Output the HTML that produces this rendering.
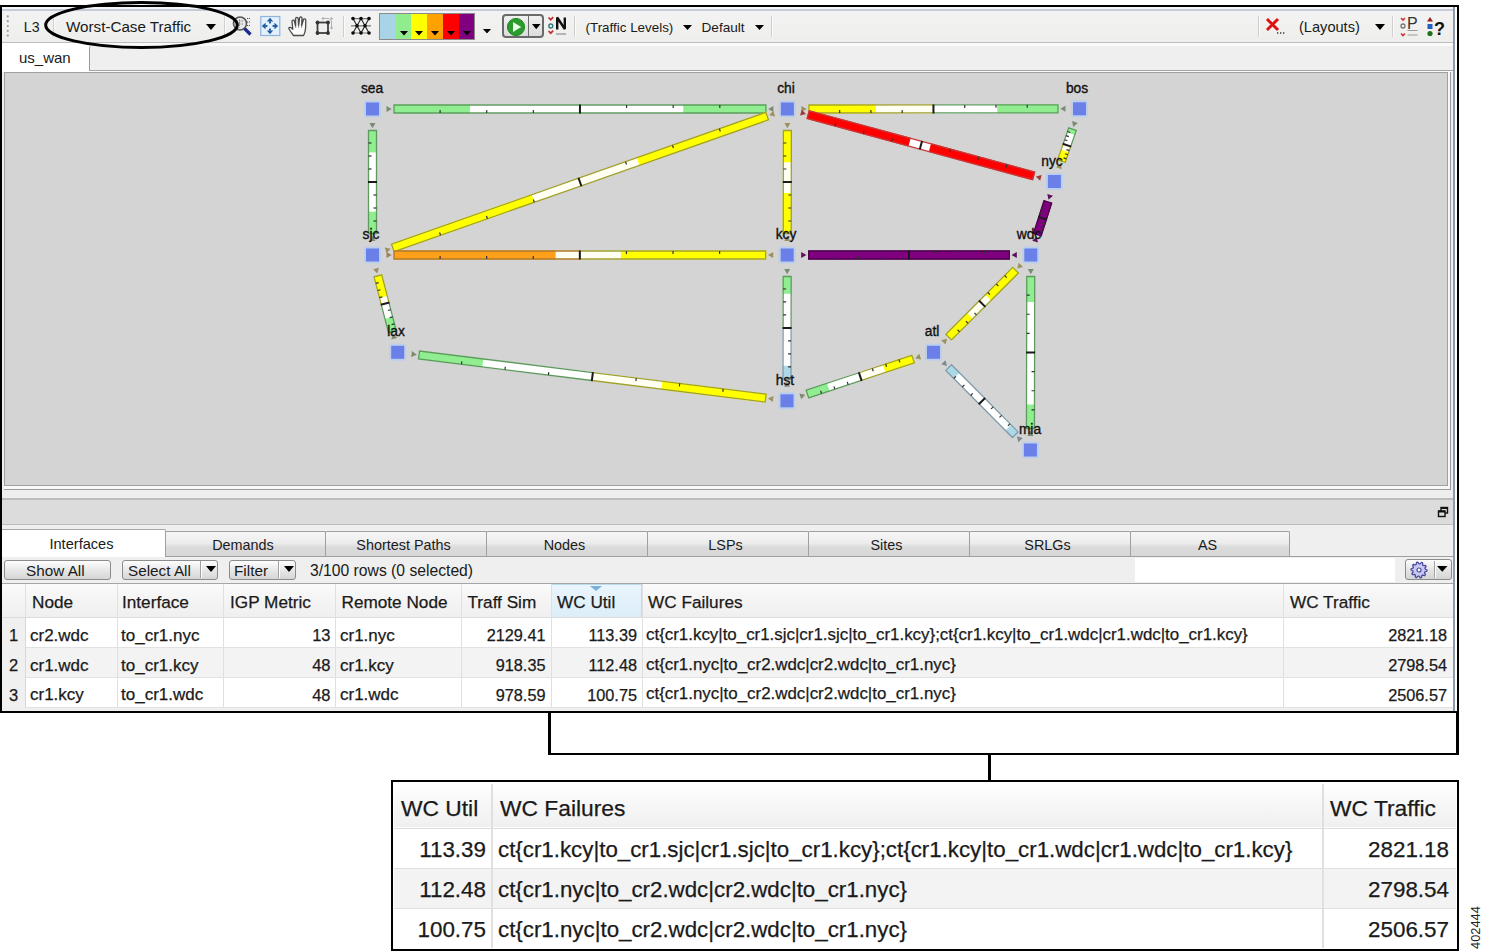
<!DOCTYPE html>
<html><head><meta charset="utf-8">
<style>
*{box-sizing:border-box}
html,body{margin:0;padding:0;background:#fff;width:1489px;height:951px;overflow:hidden;font-family:"Liberation Sans", sans-serif;}
.a{position:absolute}
.t{position:absolute;white-space:pre;color:#1a1a1a;line-height:1}
.b{-webkit-text-stroke:0.25px currentColor}
</style></head><body>
<div class="a" style="left:0px;top:5px;width:1459px;height:708px;background:#efefef;border-left:2px solid #000;border-top:2px solid #000;border-right:2.5px solid #000;border-bottom:2.5px solid #000"></div><div class="a" style="left:2px;top:7px;width:1451px;height:2px;background:#f6f6fa"></div><div class="a" style="left:2px;top:9px;width:1451px;height:2px;background:#c6cad6"></div><div class="a" style="left:2px;top:11px;width:1451px;height:31px;background:linear-gradient(#f3f3f3,#eeeeec)"></div><div class="a" style="left:2px;top:41.5px;width:1451px;height:1.5px;background:#bdbdbd"></div><div class="a" style="left:1453px;top:7px;width:2px;height:704px;background:#8e9baa"></div><div class="a" style="left:1455px;top:7px;width:2px;height:704px;background:#ffffff"></div><svg class="a" style="left:5px;top:14px" width="6" height="26"><circle cx="2.8" cy="2.4" r="1.1" fill="#9a9a9a"/><circle cx="2.8" cy="7.2" r="1.1" fill="#9a9a9a"/><circle cx="2.8" cy="12.0" r="1.1" fill="#9a9a9a"/><circle cx="2.8" cy="16.8" r="1.1" fill="#9a9a9a"/><circle cx="2.8" cy="21.6" r="1.1" fill="#9a9a9a"/></svg><div class="t " style="left:23.8px;top:20.0px;font-size:14.2px;color:#1a1a1a;">L3</div><div class="a" style="left:53px;top:16px;width:1px;height:21px;background:#cfcfcf;border-right:1px solid #fafafa;width:2px"></div><div class="t " style="left:66px;top:18.6px;font-size:15.2px;color:#1a1a1a;">Worst-Case Traffic</div><svg class="a" style="left:206px;top:24px" width="10" height="6"><path d="M0,0H10L5.0,6Z" fill="#000"/></svg><div class="a" style="left:224px;top:16px;width:1px;height:21px;background:#cfcfcf;border-right:1px solid #fafafa;width:2px"></div>
<svg class="a" style="left:228px;top:13px" width="150" height="26" viewBox="228 13 150 26">
 <!-- magnifier -->
 <circle cx="240" cy="23.5" r="6.5" fill="#e8e8e8" stroke="#555" stroke-width="1.6"/>
 <path d="M236.5,21 h7 M236.5,24 h7 M239.5,19.5 v8" stroke="#888" stroke-width="1" stroke-dasharray="1.5 1"/>
 <path d="M244.5,28.5 L250.5,34.5" stroke="#1a2a90" stroke-width="3.2"/>
 <path d="M247,18.5 h3 M247,22 h3 M247,25.5 h3" stroke="#555" stroke-width="1.2" stroke-dasharray="1.2 0.8"/>
 <!-- fit -->
 <rect x="260.8" y="16.5" width="19" height="19" fill="#e2f1fd" stroke="#8fb4dc" stroke-width="1.2"/>
 <g fill="#1f5a9e">
  <path d="M270,17.8 L266.8,21.6 H273.2Z"/><rect x="269" y="21.4" width="2" height="2"/>
  <path d="M270,34.2 L266.8,30.4 H273.2Z"/><rect x="269" y="28.6" width="2" height="2"/>
  <path d="M261.8,26 L265.6,22.8 V29.2Z"/><rect x="265.4" y="25" width="2" height="2"/>
  <path d="M278.2,26 L274.4,22.8 V29.2Z"/><rect x="272.6" y="25" width="2" height="2"/>
 </g>
 <!-- hand -->
 <path d="M293.5,35.5 C292,33.5 290.5,31.5 289,29 C288.3,27.8 289.5,26.8 290.8,27.6 L292.8,29.2 L292,21.5 C291.8,20 294,19.6 294.4,21 L295.6,26 L295.6,18.6 C295.6,17 298,17 298.2,18.6 L298.6,25.5 L299.6,17.8 C299.8,16.3 302.2,16.5 302,18.2 L301.6,25.8 L303.4,19.8 C303.8,18.4 306,18.8 305.8,20.4 L305.6,28 C305.4,31 304.8,33.5 303.6,35.5Z" fill="#fafafa" stroke="#4a4a4a" stroke-width="1.3" stroke-linejoin="round"/>
 <path d="M295.6,26 V28 M298.6,25.5 V28 M301.6,25.8 V28" stroke="#888" stroke-width="0.8"/>
 <!-- select -->
 <path d="M323,18.5 h6 l2.5,2.5 v8 M331.5,21 v0" fill="none" stroke="#b0b0b0" stroke-width="1"/>
 <circle cx="323" cy="18.5" r="1.2" fill="#b0b0b0"/><circle cx="331.5" cy="18.5" r="1.2" fill="#b0b0b0"/><circle cx="331.5" cy="28" r="1.2" fill="#b0b0b0"/>
 <rect x="317.5" y="22.5" width="10.5" height="10.5" fill="#efefef" fill-opacity="0.6" stroke="#404040" stroke-width="1.8"/>
 <circle cx="317.5" cy="22.5" r="1.9" fill="#333"/><circle cx="328" cy="22.5" r="1.9" fill="#333"/><circle cx="317.5" cy="33" r="1.9" fill="#333"/><circle cx="328" cy="33" r="1.9" fill="#333"/>
 <!-- mesh -->
 <g stroke="#222" stroke-width="1.1" fill="none">
  <path d="M353,18.6 L357,25.8 L361,33 L365,25.8 L369,18.6 M353,33 L357,25.8 L361,18.6 L365,25.8 L369,33"/>
 </g>
 <g stroke="#777" stroke-width="1.2"><path d="M353,18.6 H369 M351,25.8 H371 M353,33 H369"/></g>
 <g fill="#0a0a0a"><circle cx="353" cy="18.6" r="1.8"/><circle cx="361" cy="18.6" r="1.8"/><circle cx="369" cy="18.6" r="1.8"/><circle cx="357" cy="25.8" r="1.8"/><circle cx="365" cy="25.8" r="1.8"/><circle cx="353" cy="33" r="1.8"/><circle cx="361" cy="33" r="1.8"/><circle cx="369" cy="33" r="1.8"/></g>
</svg><div class="a" style="left:343px;top:16px;width:1px;height:21px;background:#cfcfcf;border-right:1px solid #fafafa;width:2px"></div><div class="a" style="left:379px;top:13px;width:96px;height:27px;border:1px solid #8a8a8a;background:#ccc"></div><div class="a" style="left:380.0px;top:14px;width:15.8px;height:25px;background:#a9d4e6"></div><div class="a" style="left:395.7px;top:14px;width:15.8px;height:25px;background:#90ec8c"></div><svg class="a" style="left:399.7px;top:31px" width="8" height="4.5"><path d="M0,0H8L4.0,4.5Z" fill="#000"/></svg><div class="a" style="left:411.4px;top:14px;width:15.8px;height:25px;background:#ffff00"></div><svg class="a" style="left:415.4px;top:31px" width="8" height="4.5"><path d="M0,0H8L4.0,4.5Z" fill="#000"/></svg><div class="a" style="left:427.1px;top:14px;width:15.8px;height:25px;background:#ffa200"></div><svg class="a" style="left:431.1px;top:31px" width="8" height="4.5"><path d="M0,0H8L4.0,4.5Z" fill="#000"/></svg><div class="a" style="left:442.8px;top:14px;width:15.8px;height:25px;background:#ff0000"></div><svg class="a" style="left:446.8px;top:31px" width="8" height="4.5"><path d="M0,0H8L4.0,4.5Z" fill="#000"/></svg><div class="a" style="left:458.5px;top:14px;width:15.8px;height:25px;background:#80007f"></div><svg class="a" style="left:462.5px;top:31px" width="8" height="4.5"><path d="M0,0H8L4.0,4.5Z" fill="#000"/></svg><svg class="a" style="left:483px;top:28.5px" width="8" height="4.5"><path d="M0,0H8L4.0,4.5Z" fill="#000"/></svg><div class="a" style="left:501.5px;top:14px;width:42px;height:24px;border:2px solid #6a6a6a;border-radius:4px;background:linear-gradient(#f0f0f0,#dcdcdc)"></div><div class="a" style="left:527.5px;top:15px;width:1.8px;height:22px;background:#6a6a6a"></div><svg class="a" style="left:505px;top:16px" width="22" height="22"><circle cx="11" cy="11" r="8.6" fill="#2c9a2c"/><circle cx="11" cy="11" r="8.6" fill="none" stroke="#208a20" stroke-width="1"/><path d="M8,6 L16.2,11 L8,16Z" fill="#e8ffe8"/></svg><svg class="a" style="left:532px;top:23.5px" width="8.5" height="5.2"><path d="M0,0H8.5L4.25,5.2Z" fill="#000"/></svg><svg class="a" style="left:546px;top:14px" width="24" height="24"><path d="M2.5,3.5 l2.2,2.2 l2.5,-2.5 M2.5,17 l2.2,2.2 l2.5,-2.5" stroke="#c03030" stroke-width="1.7" fill="none"/><circle cx="4.8" cy="12" r="2" fill="#d0f0f0" stroke="#3a7a7a" stroke-width="1.4"/><path d="M11.2,15.5 V3.5 L18.8,15 V3.5" stroke="#111" stroke-width="2.4" fill="none" stroke-linejoin="bevel"/><path d="M10,20 h10" stroke="#8a8a9a" stroke-width="1.2"/></svg><div class="a" style="left:574px;top:16px;width:1px;height:21px;background:#cfcfcf;border-right:1px solid #fafafa;width:2px"></div><div class="t " style="left:585.5px;top:20.7px;font-size:13.4px;color:#1a1a1a;">(Traffic Levels)</div><svg class="a" style="left:683px;top:25px" width="9" height="5"><path d="M0,0H9L4.5,5Z" fill="#000"/></svg><div class="t " style="left:701.5px;top:20.5px;font-size:13.6px;color:#1a1a1a;">Default</div><svg class="a" style="left:755px;top:25px" width="9" height="5"><path d="M0,0H9L4.5,5Z" fill="#000"/></svg><div class="a" style="left:771px;top:16px;width:1px;height:21px;background:#cfcfcf;border-right:1px solid #fafafa;width:2px"></div><div class="a" style="left:1257.5px;top:16px;width:1px;height:21px;background:#cfcfcf;border-right:1px solid #fafafa;width:2px"></div><svg class="a" style="left:1264px;top:16px" width="24" height="20"><path d="M3,3 L14,14 M14,3 L3,14" stroke="#e01010" stroke-width="3"/><path d="M13,17 h1.3 M16,17 h1.3 M19,17 h1.3" stroke="#333" stroke-width="1.3"/></svg><div class="t " style="left:1299px;top:19.6px;font-size:14.6px;color:#1a1a1a;">(Layouts)</div><svg class="a" style="left:1374.5px;top:23.5px" width="10" height="6"><path d="M0,0H10L5.0,6Z" fill="#000"/></svg><div class="a" style="left:1392px;top:16px;width:1px;height:21px;background:#cfcfcf;border-right:1px solid #fafafa;width:2px"></div><svg class="a" style="left:1398px;top:14px" width="24" height="24"><path d="M3,4 l2,2 l2,-2 M3,19.5 l2,2 l2,-2" stroke="#cc3333" stroke-width="1.6" fill="none"/><circle cx="5" cy="12" r="2" fill="none" stroke="#777" stroke-width="1.3"/><text x="9" y="15" font-family="Liberation Sans" font-size="16" fill="#333">P</text><path d="M9.5,16.5 h10 M9.5,21 h10" stroke="#999" stroke-width="1"/></svg><svg class="a" style="left:1425px;top:14px" width="22" height="24"><path d="M5,3 L8,7.5 H2Z" fill="#9a2020"/><rect x="2.5" y="10" width="5" height="5" fill="#2060c0"/><circle cx="5" cy="19.5" r="2.6" fill="#207020"/><text x="9" y="21" font-family="Liberation Sans" font-weight="bold" font-size="18" fill="#111">?</text></svg><div class="a" style="left:2px;top:43px;width:1451px;height:29px;background:#fafafa"></div><div class="a" style="left:2px;top:43px;width:87px;height:29px;background:#fff"></div><div class="a" style="left:89px;top:46.4px;width:1364px;height:25px;border-left:1.3px solid #9a9a9a;border-bottom:1.3px solid #a4a4a4;background:#efefef;border-radius:2px 0 0 0"></div><div class="t " style="left:19px;top:49.8px;font-size:15px;color:#1a1a1a;">us_wan</div><div class="a" style="left:4px;top:72px;width:1447px;height:418px;border-right:1px solid #9a9a9a;border-bottom:1px solid #9a9a9a;background:#f8f8f8"></div><div class="a" style="left:4.4px;top:72px;width:1444px;height:414px;border:1.6px solid #a0a0a0;background:#d4d4d4"></div><svg width="1489" height="951" style="position:absolute;left:0;top:0"><g transform="translate(372.50,109.00) rotate(0.000)"><rect x="21.00" y="-4.5" width="186.45" height="9.0" fill="#ffffff"/><rect x="207.45" y="-4.5" width="186.45" height="9.0" fill="#ffffff"/><rect x="21.00" y="-4.5" width="76.44" height="9.0" fill="#90ee90"/><rect x="310.74" y="-4.5" width="83.16" height="9.0" fill="#90ee90"/><path d="M207.45,-4.0 H21.50 V4.0 H207.45" fill="none" stroke="#5e9a5e" stroke-width="1.3"/><path d="M207.45,-4.0 H393.40 V4.0 H207.45" fill="none" stroke="#5e9a5e" stroke-width="1.3"/><line x1="67.61" y1="4.0" x2="67.61" y2="1.0" stroke="#333" stroke-width="1.2"/><line x1="254.06" y1="-4.0" x2="254.06" y2="-1.0" stroke="#333" stroke-width="1.2"/><line x1="114.22" y1="4.0" x2="114.22" y2="1.0" stroke="#333" stroke-width="1.2"/><line x1="300.67" y1="-4.0" x2="300.67" y2="-1.0" stroke="#333" stroke-width="1.2"/><line x1="160.84" y1="4.0" x2="160.84" y2="1.0" stroke="#333" stroke-width="1.2"/><line x1="347.29" y1="-4.0" x2="347.29" y2="-1.0" stroke="#333" stroke-width="1.2"/><line x1="207.45" y1="-4.5" x2="207.45" y2="4.5" stroke="#1a1a1a" stroke-width="2"/><path d="M14.00,-3 L19.20,0 L14.00,3Z" fill="#7a8c70"/><path d="M400.90,-3 L395.70,0 L400.90,3Z" fill="#7a8c70"/></g><g transform="translate(787.40,109.00) rotate(-0.039)"><rect x="21.00" y="-4.5" width="125.05" height="9.0" fill="#fffff2"/><rect x="146.05" y="-4.5" width="125.05" height="9.0" fill="#ffffff"/><rect x="21.00" y="-4.5" width="67.53" height="9.0" fill="#ffff00"/><rect x="209.83" y="-4.5" width="61.27" height="9.0" fill="#90ee90"/><path d="M146.05,-4.0 H21.50 V4.0 H146.05" fill="none" stroke="#a0a030" stroke-width="1.3"/><path d="M146.05,-4.0 H270.60 V4.0 H146.05" fill="none" stroke="#5e9a5e" stroke-width="1.3"/><line x1="52.26" y1="4.0" x2="52.26" y2="1.0" stroke="#333" stroke-width="1.2"/><line x1="177.31" y1="-4.0" x2="177.31" y2="-1.0" stroke="#333" stroke-width="1.2"/><line x1="83.53" y1="4.0" x2="83.53" y2="1.0" stroke="#333" stroke-width="1.2"/><line x1="208.58" y1="-4.0" x2="208.58" y2="-1.0" stroke="#333" stroke-width="1.2"/><line x1="114.79" y1="4.0" x2="114.79" y2="1.0" stroke="#333" stroke-width="1.2"/><line x1="239.84" y1="-4.0" x2="239.84" y2="-1.0" stroke="#333" stroke-width="1.2"/><line x1="146.05" y1="-4.5" x2="146.05" y2="4.5" stroke="#1a1a1a" stroke-width="2"/><path d="M14.00,-3 L19.20,0 L14.00,3Z" fill="#9a9060"/><path d="M278.10,-3 L272.90,0 L278.10,3Z" fill="#7a8c70"/></g><g transform="translate(787.40,109.00) rotate(15.192)"><rect x="21.00" y="-4.5" width="117.33" height="9.0" fill="#ffffff"/><rect x="138.33" y="-4.5" width="117.33" height="9.0" fill="#ffffff"/><rect x="21.00" y="-4.5" width="105.60" height="9.0" fill="#ff0000"/><rect x="147.72" y="-4.5" width="107.95" height="9.0" fill="#ff0000"/><path d="M138.33,-4.0 H21.50 V4.0 H138.33" fill="none" stroke="#c83838" stroke-width="1.3"/><path d="M138.33,-4.0 H255.17 V4.0 H138.33" fill="none" stroke="#c83838" stroke-width="1.3"/><line x1="50.33" y1="4.0" x2="50.33" y2="1.0" stroke="#333" stroke-width="1.2"/><line x1="167.67" y1="-4.0" x2="167.67" y2="-1.0" stroke="#333" stroke-width="1.2"/><line x1="79.67" y1="4.0" x2="79.67" y2="1.0" stroke="#333" stroke-width="1.2"/><line x1="197.00" y1="-4.0" x2="197.00" y2="-1.0" stroke="#333" stroke-width="1.2"/><line x1="109.00" y1="4.0" x2="109.00" y2="1.0" stroke="#333" stroke-width="1.2"/><line x1="226.33" y1="-4.0" x2="226.33" y2="-1.0" stroke="#333" stroke-width="1.2"/><line x1="138.33" y1="-4.5" x2="138.33" y2="4.5" stroke="#1a1a1a" stroke-width="2"/><path d="M14.00,-3 L19.20,0 L14.00,3Z" fill="#a03838"/><path d="M262.67,-3 L257.47,0 L262.67,3Z" fill="#a03838"/></g><g transform="translate(1079.50,108.80) rotate(109.047)"><rect x="21.00" y="-4.5" width="17.46" height="9.0" fill="#ffffff"/><rect x="38.46" y="-4.5" width="17.46" height="9.0" fill="#fffff2"/><rect x="21.00" y="-4.5" width="5.24" height="9.0" fill="#90ee90"/><rect x="44.56" y="-4.5" width="11.35" height="9.0" fill="#ffff00"/><path d="M38.46,-4.0 H21.50 V4.0 H38.46" fill="none" stroke="#5e9a5e" stroke-width="1.3"/><path d="M38.46,-4.0 H55.41 V4.0 H38.46" fill="none" stroke="#a0a030" stroke-width="1.3"/><line x1="25.36" y1="4.0" x2="25.36" y2="1.0" stroke="#333" stroke-width="1.2"/><line x1="42.82" y1="-4.0" x2="42.82" y2="-1.0" stroke="#333" stroke-width="1.2"/><line x1="29.73" y1="4.0" x2="29.73" y2="1.0" stroke="#333" stroke-width="1.2"/><line x1="47.18" y1="-4.0" x2="47.18" y2="-1.0" stroke="#333" stroke-width="1.2"/><line x1="34.09" y1="4.0" x2="34.09" y2="1.0" stroke="#333" stroke-width="1.2"/><line x1="51.55" y1="-4.0" x2="51.55" y2="-1.0" stroke="#333" stroke-width="1.2"/><line x1="38.46" y1="-4.5" x2="38.46" y2="4.5" stroke="#1a1a1a" stroke-width="2"/><path d="M14.00,-3 L19.20,0 L14.00,3Z" fill="#7a8c70"/><path d="M62.91,-3 L57.71,0 L62.91,3Z" fill="#9a9060"/></g><g transform="translate(372.50,109.00) rotate(90.000)"><rect x="21.00" y="-4.5" width="52.00" height="9.0" fill="#ffffff"/><rect x="73.00" y="-4.5" width="52.00" height="9.0" fill="#ffffff"/><rect x="21.00" y="-4.5" width="22.36" height="9.0" fill="#90ee90"/><rect x="102.64" y="-4.5" width="22.36" height="9.0" fill="#90ee90"/><path d="M73.00,-4.0 H21.50 V4.0 H73.00" fill="none" stroke="#5e9a5e" stroke-width="1.3"/><path d="M73.00,-4.0 H124.50 V4.0 H73.00" fill="none" stroke="#5e9a5e" stroke-width="1.3"/><line x1="34.00" y1="4.0" x2="34.00" y2="1.0" stroke="#333" stroke-width="1.2"/><line x1="86.00" y1="-4.0" x2="86.00" y2="-1.0" stroke="#333" stroke-width="1.2"/><line x1="47.00" y1="4.0" x2="47.00" y2="1.0" stroke="#333" stroke-width="1.2"/><line x1="99.00" y1="-4.0" x2="99.00" y2="-1.0" stroke="#333" stroke-width="1.2"/><line x1="60.00" y1="4.0" x2="60.00" y2="1.0" stroke="#333" stroke-width="1.2"/><line x1="112.00" y1="-4.0" x2="112.00" y2="-1.0" stroke="#333" stroke-width="1.2"/><line x1="73.00" y1="-4.5" x2="73.00" y2="4.5" stroke="#1a1a1a" stroke-width="2"/><path d="M14.00,-3 L19.20,0 L14.00,3Z" fill="#7a8c70"/><path d="M132.00,-3 L126.80,0 L132.00,3Z" fill="#7a8c70"/></g><g transform="translate(787.40,109.00) rotate(90.078)"><rect x="21.00" y="-4.5" width="52.00" height="9.0" fill="#fffff2"/><rect x="73.00" y="-4.5" width="52.00" height="9.0" fill="#fffff2"/><rect x="21.00" y="-4.5" width="32.24" height="9.0" fill="#ffff00"/><rect x="83.92" y="-4.5" width="41.08" height="9.0" fill="#ffff00"/><path d="M73.00,-4.0 H21.50 V4.0 H73.00" fill="none" stroke="#a0a030" stroke-width="1.3"/><path d="M73.00,-4.0 H124.50 V4.0 H73.00" fill="none" stroke="#a0a030" stroke-width="1.3"/><line x1="34.00" y1="4.0" x2="34.00" y2="1.0" stroke="#333" stroke-width="1.2"/><line x1="86.00" y1="-4.0" x2="86.00" y2="-1.0" stroke="#333" stroke-width="1.2"/><line x1="47.00" y1="4.0" x2="47.00" y2="1.0" stroke="#333" stroke-width="1.2"/><line x1="99.00" y1="-4.0" x2="99.00" y2="-1.0" stroke="#333" stroke-width="1.2"/><line x1="60.00" y1="4.0" x2="60.00" y2="1.0" stroke="#333" stroke-width="1.2"/><line x1="112.00" y1="-4.0" x2="112.00" y2="-1.0" stroke="#333" stroke-width="1.2"/><line x1="73.00" y1="-4.5" x2="73.00" y2="4.5" stroke="#1a1a1a" stroke-width="2"/><path d="M14.00,-3 L19.20,0 L14.00,3Z" fill="#9a9060"/><path d="M132.00,-3 L126.80,0 L132.00,3Z" fill="#9a9060"/></g><g transform="translate(372.50,255.00) rotate(-19.387)"><rect x="21.00" y="-4.5" width="198.92" height="9.0" fill="#fffff2"/><rect x="219.92" y="-4.5" width="198.92" height="9.0" fill="#fffff2"/><rect x="21.00" y="-4.5" width="149.19" height="9.0" fill="#ffff00"/><rect x="281.58" y="-4.5" width="137.25" height="9.0" fill="#ffff00"/><path d="M219.92,-4.0 H21.50 V4.0 H219.92" fill="none" stroke="#a0a030" stroke-width="1.3"/><path d="M219.92,-4.0 H418.34 V4.0 H219.92" fill="none" stroke="#a0a030" stroke-width="1.3"/><line x1="70.73" y1="4.0" x2="70.73" y2="1.0" stroke="#333" stroke-width="1.2"/><line x1="269.65" y1="-4.0" x2="269.65" y2="-1.0" stroke="#333" stroke-width="1.2"/><line x1="120.46" y1="4.0" x2="120.46" y2="1.0" stroke="#333" stroke-width="1.2"/><line x1="319.38" y1="-4.0" x2="319.38" y2="-1.0" stroke="#333" stroke-width="1.2"/><line x1="170.19" y1="4.0" x2="170.19" y2="1.0" stroke="#333" stroke-width="1.2"/><line x1="369.11" y1="-4.0" x2="369.11" y2="-1.0" stroke="#333" stroke-width="1.2"/><line x1="219.92" y1="-4.5" x2="219.92" y2="4.5" stroke="#1a1a1a" stroke-width="2"/><path d="M14.00,-3 L19.20,0 L14.00,3Z" fill="#9a9060"/><path d="M425.84,-3 L420.64,0 L425.84,3Z" fill="#9a9060"/></g><g transform="translate(372.50,255.00) rotate(0.000)"><rect x="21.00" y="-4.5" width="186.35" height="9.0" fill="#fffff2"/><rect x="207.35" y="-4.5" width="186.35" height="9.0" fill="#fffff2"/><rect x="21.00" y="-4.5" width="162.12" height="9.0" fill="#ffa01a"/><rect x="248.35" y="-4.5" width="145.35" height="9.0" fill="#ffff00"/><path d="M207.35,-4.0 H21.50 V4.0 H207.35" fill="none" stroke="#b07828" stroke-width="1.3"/><path d="M207.35,-4.0 H393.20 V4.0 H207.35" fill="none" stroke="#a0a030" stroke-width="1.3"/><line x1="67.59" y1="4.0" x2="67.59" y2="1.0" stroke="#333" stroke-width="1.2"/><line x1="253.94" y1="-4.0" x2="253.94" y2="-1.0" stroke="#333" stroke-width="1.2"/><line x1="114.18" y1="4.0" x2="114.18" y2="1.0" stroke="#333" stroke-width="1.2"/><line x1="300.53" y1="-4.0" x2="300.53" y2="-1.0" stroke="#333" stroke-width="1.2"/><line x1="160.76" y1="4.0" x2="160.76" y2="1.0" stroke="#333" stroke-width="1.2"/><line x1="347.11" y1="-4.0" x2="347.11" y2="-1.0" stroke="#333" stroke-width="1.2"/><line x1="207.35" y1="-4.5" x2="207.35" y2="4.5" stroke="#1a1a1a" stroke-width="2"/><path d="M14.00,-3 L19.20,0 L14.00,3Z" fill="#9a8060"/><path d="M400.70,-3 L395.50,0 L400.70,3Z" fill="#9a9060"/></g><g transform="translate(787.20,255.00) rotate(0.000)"><rect x="21.00" y="-4.5" width="100.80" height="9.0" fill="#ffffff"/><rect x="121.80" y="-4.5" width="100.80" height="9.0" fill="#ffffff"/><rect x="21.00" y="-4.5" width="100.80" height="9.0" fill="#800080"/><rect x="121.80" y="-4.5" width="100.80" height="9.0" fill="#800080"/><path d="M121.80,-4.0 H21.50 V4.0 H121.80" fill="none" stroke="#4a004a" stroke-width="1.3"/><path d="M121.80,-4.0 H222.10 V4.0 H121.80" fill="none" stroke="#4a004a" stroke-width="1.3"/><line x1="46.20" y1="4.0" x2="46.20" y2="1.0" stroke="#333" stroke-width="1.2"/><line x1="147.00" y1="-4.0" x2="147.00" y2="-1.0" stroke="#333" stroke-width="1.2"/><line x1="71.40" y1="4.0" x2="71.40" y2="1.0" stroke="#333" stroke-width="1.2"/><line x1="172.20" y1="-4.0" x2="172.20" y2="-1.0" stroke="#333" stroke-width="1.2"/><line x1="96.60" y1="4.0" x2="96.60" y2="1.0" stroke="#333" stroke-width="1.2"/><line x1="197.40" y1="-4.0" x2="197.40" y2="-1.0" stroke="#333" stroke-width="1.2"/><line x1="121.80" y1="-4.5" x2="121.80" y2="4.5" stroke="#1a1a1a" stroke-width="2"/><path d="M14.00,-3 L19.20,0 L14.00,3Z" fill="#5a105a"/><path d="M229.60,-3 L224.40,0 L229.60,3Z" fill="#5a105a"/></g><g transform="translate(1054.40,181.50) rotate(107.801)"><rect x="21.00" y="-4.5" width="17.60" height="9.0" fill="#ffffff"/><rect x="38.60" y="-4.5" width="17.60" height="9.0" fill="#ffffff"/><rect x="21.00" y="-4.5" width="17.60" height="9.0" fill="#800080"/><rect x="38.60" y="-4.5" width="17.60" height="9.0" fill="#800080"/><path d="M38.60,-4.0 H21.50 V4.0 H38.60" fill="none" stroke="#4a004a" stroke-width="1.3"/><path d="M38.60,-4.0 H55.70 V4.0 H38.60" fill="none" stroke="#4a004a" stroke-width="1.3"/><line x1="25.40" y1="4.0" x2="25.40" y2="1.0" stroke="#333" stroke-width="1.2"/><line x1="43.00" y1="-4.0" x2="43.00" y2="-1.0" stroke="#333" stroke-width="1.2"/><line x1="29.80" y1="4.0" x2="29.80" y2="1.0" stroke="#333" stroke-width="1.2"/><line x1="47.40" y1="-4.0" x2="47.40" y2="-1.0" stroke="#333" stroke-width="1.2"/><line x1="34.20" y1="4.0" x2="34.20" y2="1.0" stroke="#333" stroke-width="1.2"/><line x1="51.80" y1="-4.0" x2="51.80" y2="-1.0" stroke="#333" stroke-width="1.2"/><line x1="38.60" y1="-4.5" x2="38.60" y2="4.5" stroke="#1a1a1a" stroke-width="2"/><path d="M14.00,-3 L19.20,0 L14.00,3Z" fill="#5a105a"/><path d="M63.20,-3 L58.00,0 L63.20,3Z" fill="#5a105a"/></g><g transform="translate(372.50,255.00) rotate(75.480)"><rect x="21.00" y="-4.5" width="29.26" height="9.0" fill="#fffff2"/><rect x="50.26" y="-4.5" width="29.26" height="9.0" fill="#ffffff"/><rect x="21.00" y="-4.5" width="22.23" height="9.0" fill="#ffff00"/><rect x="64.88" y="-4.5" width="14.63" height="9.0" fill="#90ee90"/><path d="M50.26,-4.0 H21.50 V4.0 H50.26" fill="none" stroke="#a0a030" stroke-width="1.3"/><path d="M50.26,-4.0 H79.01 V4.0 H50.26" fill="none" stroke="#5e9a5e" stroke-width="1.3"/><line x1="28.31" y1="4.0" x2="28.31" y2="1.0" stroke="#333" stroke-width="1.2"/><line x1="57.57" y1="-4.0" x2="57.57" y2="-1.0" stroke="#333" stroke-width="1.2"/><line x1="35.63" y1="4.0" x2="35.63" y2="1.0" stroke="#333" stroke-width="1.2"/><line x1="64.88" y1="-4.0" x2="64.88" y2="-1.0" stroke="#333" stroke-width="1.2"/><line x1="42.94" y1="4.0" x2="42.94" y2="1.0" stroke="#333" stroke-width="1.2"/><line x1="72.20" y1="-4.0" x2="72.20" y2="-1.0" stroke="#333" stroke-width="1.2"/><line x1="50.26" y1="-4.5" x2="50.26" y2="4.5" stroke="#1a1a1a" stroke-width="2"/><path d="M14.00,-3 L19.20,0 L14.00,3Z" fill="#9a9060"/><path d="M86.51,-3 L81.31,0 L86.51,3Z" fill="#7a8c70"/></g><g transform="translate(397.70,352.30) rotate(7.101)"><rect x="21.00" y="-4.5" width="175.15" height="9.0" fill="#ffffff"/><rect x="196.15" y="-4.5" width="175.15" height="9.0" fill="#fffff2"/><rect x="21.00" y="-4.5" width="64.81" height="9.0" fill="#90ee90"/><rect x="266.22" y="-4.5" width="105.09" height="9.0" fill="#ffff00"/><path d="M196.15,-4.0 H21.50 V4.0 H196.15" fill="none" stroke="#5e9a5e" stroke-width="1.3"/><path d="M196.15,-4.0 H370.81 V4.0 H196.15" fill="none" stroke="#a0a030" stroke-width="1.3"/><line x1="64.79" y1="4.0" x2="64.79" y2="1.0" stroke="#333" stroke-width="1.2"/><line x1="239.94" y1="-4.0" x2="239.94" y2="-1.0" stroke="#333" stroke-width="1.2"/><line x1="108.58" y1="4.0" x2="108.58" y2="1.0" stroke="#333" stroke-width="1.2"/><line x1="283.73" y1="-4.0" x2="283.73" y2="-1.0" stroke="#333" stroke-width="1.2"/><line x1="152.37" y1="4.0" x2="152.37" y2="1.0" stroke="#333" stroke-width="1.2"/><line x1="327.52" y1="-4.0" x2="327.52" y2="-1.0" stroke="#333" stroke-width="1.2"/><line x1="196.15" y1="-4.5" x2="196.15" y2="4.5" stroke="#1a1a1a" stroke-width="2"/><path d="M14.00,-3 L19.20,0 L14.00,3Z" fill="#7a8c70"/><path d="M378.31,-3 L373.11,0 L378.31,3Z" fill="#9a9060"/></g><g transform="translate(787.20,255.00) rotate(90.079)"><rect x="21.00" y="-4.5" width="51.90" height="9.0" fill="#ffffff"/><rect x="72.90" y="-4.5" width="51.90" height="9.0" fill="#ffffff"/><rect x="21.00" y="-4.5" width="17.65" height="9.0" fill="#90ee90"/><rect x="110.79" y="-4.5" width="14.01" height="9.0" fill="#add8e6"/><path d="M72.90,-4.0 H21.50 V4.0 H72.90" fill="none" stroke="#5e9a5e" stroke-width="1.3"/><path d="M72.90,-4.0 H124.30 V4.0 H72.90" fill="none" stroke="#7e9aaa" stroke-width="1.3"/><line x1="33.98" y1="4.0" x2="33.98" y2="1.0" stroke="#333" stroke-width="1.2"/><line x1="85.88" y1="-4.0" x2="85.88" y2="-1.0" stroke="#333" stroke-width="1.2"/><line x1="46.95" y1="4.0" x2="46.95" y2="1.0" stroke="#333" stroke-width="1.2"/><line x1="98.85" y1="-4.0" x2="98.85" y2="-1.0" stroke="#333" stroke-width="1.2"/><line x1="59.93" y1="4.0" x2="59.93" y2="1.0" stroke="#333" stroke-width="1.2"/><line x1="111.83" y1="-4.0" x2="111.83" y2="-1.0" stroke="#333" stroke-width="1.2"/><line x1="72.90" y1="-4.5" x2="72.90" y2="4.5" stroke="#1a1a1a" stroke-width="2"/><path d="M14.00,-3 L19.20,0 L14.00,3Z" fill="#7a8c70"/><path d="M131.80,-3 L126.60,0 L131.80,3Z" fill="#7a8a90"/></g><g transform="translate(787.00,400.80) rotate(-18.318)"><rect x="21.00" y="-4.5" width="56.16" height="9.0" fill="#ffffff"/><rect x="77.16" y="-4.5" width="56.16" height="9.0" fill="#fffff2"/><rect x="21.00" y="-4.5" width="22.46" height="9.0" fill="#90ee90"/><rect x="102.43" y="-4.5" width="30.89" height="9.0" fill="#ffff00"/><path d="M77.16,-4.0 H21.50 V4.0 H77.16" fill="none" stroke="#5e9a5e" stroke-width="1.3"/><path d="M77.16,-4.0 H132.82 V4.0 H77.16" fill="none" stroke="#a0a030" stroke-width="1.3"/><line x1="35.04" y1="4.0" x2="35.04" y2="1.0" stroke="#333" stroke-width="1.2"/><line x1="91.20" y1="-4.0" x2="91.20" y2="-1.0" stroke="#333" stroke-width="1.2"/><line x1="49.08" y1="4.0" x2="49.08" y2="1.0" stroke="#333" stroke-width="1.2"/><line x1="105.24" y1="-4.0" x2="105.24" y2="-1.0" stroke="#333" stroke-width="1.2"/><line x1="63.12" y1="4.0" x2="63.12" y2="1.0" stroke="#333" stroke-width="1.2"/><line x1="119.28" y1="-4.0" x2="119.28" y2="-1.0" stroke="#333" stroke-width="1.2"/><line x1="77.16" y1="-4.5" x2="77.16" y2="4.5" stroke="#1a1a1a" stroke-width="2"/><path d="M14.00,-3 L19.20,0 L14.00,3Z" fill="#7a8c70"/><path d="M140.32,-3 L135.12,0 L140.32,3Z" fill="#9a9060"/></g><g transform="translate(933.50,352.30) rotate(-45.000)"><rect x="21.00" y="-4.5" width="47.80" height="9.0" fill="#fffff2"/><rect x="68.80" y="-4.5" width="47.80" height="9.0" fill="#fffff2"/><rect x="21.00" y="-4.5" width="30.59" height="9.0" fill="#ffff00"/><rect x="77.41" y="-4.5" width="39.20" height="9.0" fill="#ffff00"/><path d="M68.80,-4.0 H21.50 V4.0 H68.80" fill="none" stroke="#a0a030" stroke-width="1.3"/><path d="M68.80,-4.0 H116.10 V4.0 H68.80" fill="none" stroke="#a0a030" stroke-width="1.3"/><line x1="32.95" y1="4.0" x2="32.95" y2="1.0" stroke="#333" stroke-width="1.2"/><line x1="80.75" y1="-4.0" x2="80.75" y2="-1.0" stroke="#333" stroke-width="1.2"/><line x1="44.90" y1="4.0" x2="44.90" y2="1.0" stroke="#333" stroke-width="1.2"/><line x1="92.70" y1="-4.0" x2="92.70" y2="-1.0" stroke="#333" stroke-width="1.2"/><line x1="56.85" y1="4.0" x2="56.85" y2="1.0" stroke="#333" stroke-width="1.2"/><line x1="104.65" y1="-4.0" x2="104.65" y2="-1.0" stroke="#333" stroke-width="1.2"/><line x1="68.80" y1="-4.5" x2="68.80" y2="4.5" stroke="#1a1a1a" stroke-width="2"/><path d="M14.00,-3 L19.20,0 L14.00,3Z" fill="#9a9060"/><path d="M123.60,-3 L118.40,0 L123.60,3Z" fill="#9a9060"/></g><g transform="translate(933.50,352.30) rotate(45.236)"><rect x="21.00" y="-4.5" width="47.80" height="9.0" fill="#ffffff"/><rect x="68.80" y="-4.5" width="47.80" height="9.0" fill="#ffffff"/><rect x="21.00" y="-4.5" width="11.95" height="9.0" fill="#add8e6"/><rect x="106.09" y="-4.5" width="10.52" height="9.0" fill="#add8e6"/><path d="M68.80,-4.0 H21.50 V4.0 H68.80" fill="none" stroke="#7e9aaa" stroke-width="1.3"/><path d="M68.80,-4.0 H116.10 V4.0 H68.80" fill="none" stroke="#7e9aaa" stroke-width="1.3"/><line x1="32.95" y1="4.0" x2="32.95" y2="1.0" stroke="#333" stroke-width="1.2"/><line x1="80.75" y1="-4.0" x2="80.75" y2="-1.0" stroke="#333" stroke-width="1.2"/><line x1="44.90" y1="4.0" x2="44.90" y2="1.0" stroke="#333" stroke-width="1.2"/><line x1="92.70" y1="-4.0" x2="92.70" y2="-1.0" stroke="#333" stroke-width="1.2"/><line x1="56.85" y1="4.0" x2="56.85" y2="1.0" stroke="#333" stroke-width="1.2"/><line x1="104.65" y1="-4.0" x2="104.65" y2="-1.0" stroke="#333" stroke-width="1.2"/><line x1="68.80" y1="-4.5" x2="68.80" y2="4.5" stroke="#1a1a1a" stroke-width="2"/><path d="M14.00,-3 L19.20,0 L14.00,3Z" fill="#7a8a90"/><path d="M123.60,-3 L118.40,0 L123.60,3Z" fill="#7a8a90"/></g><g transform="translate(1030.80,255.00) rotate(90.118)"><rect x="21.00" y="-4.5" width="76.50" height="9.0" fill="#ffffff"/><rect x="97.50" y="-4.5" width="76.50" height="9.0" fill="#ffffff"/><rect x="21.00" y="-4.5" width="26.01" height="9.0" fill="#90ee90"/><rect x="149.52" y="-4.5" width="24.48" height="9.0" fill="#90ee90"/><path d="M97.50,-4.0 H21.50 V4.0 H97.50" fill="none" stroke="#5e9a5e" stroke-width="1.3"/><path d="M97.50,-4.0 H173.50 V4.0 H97.50" fill="none" stroke="#5e9a5e" stroke-width="1.3"/><line x1="40.13" y1="4.0" x2="40.13" y2="1.0" stroke="#333" stroke-width="1.2"/><line x1="116.63" y1="-4.0" x2="116.63" y2="-1.0" stroke="#333" stroke-width="1.2"/><line x1="59.25" y1="4.0" x2="59.25" y2="1.0" stroke="#333" stroke-width="1.2"/><line x1="135.75" y1="-4.0" x2="135.75" y2="-1.0" stroke="#333" stroke-width="1.2"/><line x1="78.38" y1="4.0" x2="78.38" y2="1.0" stroke="#333" stroke-width="1.2"/><line x1="154.88" y1="-4.0" x2="154.88" y2="-1.0" stroke="#333" stroke-width="1.2"/><line x1="97.50" y1="-4.5" x2="97.50" y2="4.5" stroke="#1a1a1a" stroke-width="2"/><path d="M14.00,-3 L19.20,0 L14.00,3Z" fill="#7a8c70"/><path d="M181.00,-3 L175.80,0 L181.00,3Z" fill="#7a8c70"/></g><rect x="364.0" y="100.5" width="17" height="17" rx="3" fill="#b4cdf2" opacity="0.8"/><rect x="366.0" y="102.5" width="13" height="13" fill="#6a80e8"/><rect x="778.9" y="100.5" width="17" height="17" rx="3" fill="#b4cdf2" opacity="0.8"/><rect x="780.9" y="102.5" width="13" height="13" fill="#6a80e8"/><rect x="1071.0" y="100.3" width="17" height="17" rx="3" fill="#b4cdf2" opacity="0.8"/><rect x="1073.0" y="102.3" width="13" height="13" fill="#6a80e8"/><rect x="1045.9" y="173.0" width="17" height="17" rx="3" fill="#b4cdf2" opacity="0.8"/><rect x="1047.9" y="175.0" width="13" height="13" fill="#6a80e8"/><rect x="364.0" y="246.5" width="17" height="17" rx="3" fill="#b4cdf2" opacity="0.8"/><rect x="366.0" y="248.5" width="13" height="13" fill="#6a80e8"/><rect x="778.7" y="246.5" width="17" height="17" rx="3" fill="#b4cdf2" opacity="0.8"/><rect x="780.7" y="248.5" width="13" height="13" fill="#6a80e8"/><rect x="1022.3" y="246.5" width="17" height="17" rx="3" fill="#b4cdf2" opacity="0.8"/><rect x="1024.3" y="248.5" width="13" height="13" fill="#6a80e8"/><rect x="389.2" y="343.8" width="17" height="17" rx="3" fill="#b4cdf2" opacity="0.8"/><rect x="391.2" y="345.8" width="13" height="13" fill="#6a80e8"/><rect x="925.0" y="343.8" width="17" height="17" rx="3" fill="#b4cdf2" opacity="0.8"/><rect x="927.0" y="345.8" width="13" height="13" fill="#6a80e8"/><rect x="778.5" y="392.3" width="17" height="17" rx="3" fill="#b4cdf2" opacity="0.8"/><rect x="780.5" y="394.3" width="13" height="13" fill="#6a80e8"/><rect x="1021.9" y="441.5" width="17" height="17" rx="3" fill="#b4cdf2" opacity="0.8"/><rect x="1023.9" y="443.5" width="13" height="13" fill="#6a80e8"/><text x="372" y="93" text-anchor="middle" font-family="Liberation Sans" font-size="13.8" fill="#111" stroke="#111" stroke-width="0.35">sea</text><text x="786" y="93" text-anchor="middle" font-family="Liberation Sans" font-size="13.8" fill="#111" stroke="#111" stroke-width="0.35">chi</text><text x="1077" y="93" text-anchor="middle" font-family="Liberation Sans" font-size="13.8" fill="#111" stroke="#111" stroke-width="0.35">bos</text><text x="1052" y="166" text-anchor="middle" font-family="Liberation Sans" font-size="13.8" fill="#111" stroke="#111" stroke-width="0.35">nyc</text><text x="371" y="239" text-anchor="middle" font-family="Liberation Sans" font-size="13.8" fill="#111" stroke="#111" stroke-width="0.35">sjc</text><text x="786" y="239" text-anchor="middle" font-family="Liberation Sans" font-size="13.8" fill="#111" stroke="#111" stroke-width="0.35">kcy</text><text x="1029" y="239" text-anchor="middle" font-family="Liberation Sans" font-size="13.8" fill="#111" stroke="#111" stroke-width="0.35">wdc</text><text x="396" y="336" text-anchor="middle" font-family="Liberation Sans" font-size="13.8" fill="#111" stroke="#111" stroke-width="0.35">lax</text><text x="932" y="336" text-anchor="middle" font-family="Liberation Sans" font-size="13.8" fill="#111" stroke="#111" stroke-width="0.35">atl</text><text x="785" y="385" text-anchor="middle" font-family="Liberation Sans" font-size="13.8" fill="#111" stroke="#111" stroke-width="0.35">hst</text><text x="1030" y="434" text-anchor="middle" font-family="Liberation Sans" font-size="13.8" fill="#111" stroke="#111" stroke-width="0.35">mia</text></svg><div class="a" style="left:2px;top:490px;width:1451px;height:8.5px;background:#eeeeee"></div><div class="a" style="left:2px;top:498.3px;width:1451px;height:1.5px;background:#bcbcbc"></div><div class="a" style="left:2px;top:499.8px;width:1451px;height:23.8px;background:#dcdcdc"></div><div class="a" style="left:2px;top:523.6px;width:1451px;height:1.5px;background:#bdbdbd"></div><svg class="a" style="left:1437px;top:506px" width="12" height="12"><rect x="4" y="1.5" width="6.5" height="5.5" fill="none" stroke="#111" stroke-width="1.4"/><rect x="1.5" y="5" width="6.5" height="5.5" fill="#dcdcdc" stroke="#111" stroke-width="1.4"/><path d="M4,2 h6.5 M1.5,5.5 h6.5" stroke="#111" stroke-width="2"/></svg><div class="a" style="left:2px;top:525.1px;width:1451px;height:32px;background:#efefef"></div><div class="a" style="left:2px;top:528.5px;width:163.5px;height:28px;background:#fff;border-top:1px solid #a6a6a6;border-right:1px solid #a6a6a6;border-radius:0 2px 0 0"></div><div class="t" style="left:-68.5px;width:300px;top:537.1px;font-size:14.6px;color:#1a1a1a;text-align:center;">Interfaces</div><div class="a" style="left:165px;top:531px;width:161px;height:25.5px;background:linear-gradient(#f7f7f7 0%,#ececec 45%,#dbdbdb 60%,#d6d6d6 100%);border:1px solid #a0a0a0;border-bottom:none;border-radius:2px 2px 0 0"></div><div class="t" style="left:93.0px;width:300px;top:537.6px;font-size:14.4px;color:#1a1a1a;text-align:center;">Demands</div><div class="a" style="left:325px;top:531px;width:162px;height:25.5px;background:linear-gradient(#f7f7f7 0%,#ececec 45%,#dbdbdb 60%,#d6d6d6 100%);border:1px solid #a0a0a0;border-bottom:none;border-radius:2px 2px 0 0"></div><div class="t" style="left:253.5px;width:300px;top:537.6px;font-size:14.4px;color:#1a1a1a;text-align:center;">Shortest Paths</div><div class="a" style="left:486px;top:531px;width:162px;height:25.5px;background:linear-gradient(#f7f7f7 0%,#ececec 45%,#dbdbdb 60%,#d6d6d6 100%);border:1px solid #a0a0a0;border-bottom:none;border-radius:2px 2px 0 0"></div><div class="t" style="left:414.5px;width:300px;top:537.6px;font-size:14.4px;color:#1a1a1a;text-align:center;">Nodes</div><div class="a" style="left:647px;top:531px;width:162px;height:25.5px;background:linear-gradient(#f7f7f7 0%,#ececec 45%,#dbdbdb 60%,#d6d6d6 100%);border:1px solid #a0a0a0;border-bottom:none;border-radius:2px 2px 0 0"></div><div class="t" style="left:575.5px;width:300px;top:537.6px;font-size:14.4px;color:#1a1a1a;text-align:center;">LSPs</div><div class="a" style="left:808px;top:531px;width:162px;height:25.5px;background:linear-gradient(#f7f7f7 0%,#ececec 45%,#dbdbdb 60%,#d6d6d6 100%);border:1px solid #a0a0a0;border-bottom:none;border-radius:2px 2px 0 0"></div><div class="t" style="left:736.5px;width:300px;top:537.6px;font-size:14.4px;color:#1a1a1a;text-align:center;">Sites</div><div class="a" style="left:969px;top:531px;width:162px;height:25.5px;background:linear-gradient(#f7f7f7 0%,#ececec 45%,#dbdbdb 60%,#d6d6d6 100%);border:1px solid #a0a0a0;border-bottom:none;border-radius:2px 2px 0 0"></div><div class="t" style="left:897.5px;width:300px;top:537.6px;font-size:14.4px;color:#1a1a1a;text-align:center;">SRLGs</div><div class="a" style="left:1130px;top:531px;width:160px;height:25.5px;background:linear-gradient(#f7f7f7 0%,#ececec 45%,#dbdbdb 60%,#d6d6d6 100%);border:1px solid #a0a0a0;border-bottom:none;border-radius:2px 2px 0 0"></div><div class="t" style="left:1057.5px;width:300px;top:537.6px;font-size:14.4px;color:#1a1a1a;text-align:center;">AS</div><div class="a" style="left:165px;top:556px;width:1288px;height:1px;background:#a0a0a0"></div><div class="a" style="left:4px;top:559.5px;width:107px;height:20.5px;border:1px solid #8c8c8c;border-radius:3px;background:linear-gradient(#fdfdfd,#e8e8e8 50%,#d6d6d6)"></div><div class="t " style="left:26px;top:562.5px;font-size:15.3px;color:#1a1a1a;">Show All</div><div class="a" style="left:122px;top:559.5px;width:95.5px;height:20.5px;border:1px solid #8c8c8c;border-radius:3px;background:linear-gradient(#fdfdfd,#e8e8e8 50%,#d6d6d6)"></div><div class="t " style="left:128px;top:562.5px;font-size:15.3px;color:#1a1a1a;">Select All</div><div class="a" style="left:199.5px;top:561px;width:1px;height:17px;background:#a0a0a0;border-right:1px solid #fff;width:2px"></div><svg class="a" style="left:205.5px;top:566px" width="10" height="6"><path d="M0,0H10L5.0,6Z" fill="#000"/></svg><div class="a" style="left:229px;top:559.5px;width:67px;height:20.5px;border:1px solid #8c8c8c;border-radius:3px;background:linear-gradient(#fdfdfd,#e8e8e8 50%,#d6d6d6)"></div><div class="t " style="left:234px;top:562.5px;font-size:15.3px;color:#1a1a1a;">Filter</div><div class="a" style="left:278px;top:561px;width:1px;height:17px;background:#a0a0a0;border-right:1px solid #fff;width:2px"></div><svg class="a" style="left:284px;top:566px" width="10" height="6"><path d="M0,0H10L5.0,6Z" fill="#000"/></svg><div class="t " style="left:310px;top:562.7px;font-size:15.7px;color:#1a1a1a;">3/100 rows (0 selected)</div><div class="a" style="left:1134.5px;top:557.5px;width:260px;height:24px;background:#fff"></div><div class="a" style="left:1405px;top:559px;width:46.5px;height:21px;border:1.5px solid #8a8a8a;border-radius:3px;background:linear-gradient(#fdfdfd,#e6e6e6 50%,#d4d4d4)"></div><div class="a" style="left:1434px;top:561px;width:1px;height:17px;background:#a0a0a0;border-right:1px solid #fff;width:2px"></div><svg class="a" style="left:1437px;top:566px" width="10.5" height="5.8"><path d="M0,0H10.5L5.25,5.8Z" fill="#000"/></svg><svg class="a" style="left:1409px;top:560px" width="20" height="20"><path d="M18.00,10.00 L17.90,11.25 L15.90,11.92 L15.52,12.81 L16.47,14.70 L15.66,15.66 L13.64,15.02 L12.81,15.52 L12.47,17.61 L11.25,17.90 L10.00,16.20 L9.03,16.12 L7.53,17.61 L6.37,17.13 L6.36,15.02 L5.62,14.38 L3.53,14.70 L2.87,13.63 L4.10,11.92 L3.88,10.97 L2.00,10.00 L2.10,8.75 L4.10,8.08 L4.48,7.19 L3.53,5.30 L4.34,4.34 L6.36,4.98 L7.19,4.48 L7.53,2.39 L8.75,2.10 L10.00,3.80 L10.97,3.88 L12.47,2.39 L13.63,2.87 L13.64,4.98 L14.38,5.62 L16.47,5.30 L17.13,6.37 L15.90,8.08 L16.12,9.03Z" fill="#c8c8f6" stroke="#4a4a98" stroke-width="1.3" stroke-linejoin="round"/><circle cx="10" cy="10" r="2" fill="#fff" stroke="#4a4a98" stroke-width="1.2"/></svg><div class="a" style="left:2px;top:582.5px;width:1451px;height:1.2px;background:#a6a6a6"></div><div class="a" style="left:2px;top:583.5px;width:1451px;height:34px;background:linear-gradient(#fbfbfb 0%,#f6f6f6 30%,#efefef 100%)"></div><div class="a" style="left:550.5px;top:583.5px;width:91px;height:34px;background:linear-gradient(#eaf5fc,#dcedf9);border:1px solid #bcdcef"></div><svg class="a" style="left:590px;top:586px" width="12" height="6"><path d="M0,0H12L6,5Z" fill="#7cb0dc"/></svg><div class="a" style="left:2px;top:617px;width:1451px;height:1px;background:#dcdcdc"></div><div class="a" style="left:25px;top:618px;width:1428px;height:30px;background:#ffffff;border-bottom:1px solid #e2e2e2"></div><div class="a" style="left:25px;top:648px;width:1428px;height:29.5px;background:#f3f3f3;border-bottom:1px solid #e2e2e2"></div><div class="a" style="left:25px;top:677.5px;width:1428px;height:30.0px;background:#ffffff;border-bottom:1px solid #e2e2e2"></div><div class="a" style="left:2px;top:618px;width:23px;height:89px;background:#f0f0f0"></div><div class="a" style="left:25px;top:584px;width:1px;height:123px;background:#e0e0e0"></div><div class="a" style="left:116.5px;top:584px;width:1px;height:123px;background:#e0e0e0"></div><div class="a" style="left:223px;top:584px;width:1px;height:123px;background:#e0e0e0"></div><div class="a" style="left:335px;top:584px;width:1px;height:123px;background:#e0e0e0"></div><div class="a" style="left:461px;top:584px;width:1px;height:123px;background:#e0e0e0"></div><div class="a" style="left:550.5px;top:584px;width:1px;height:123px;background:#e0e0e0"></div><div class="a" style="left:641.5px;top:584px;width:1px;height:123px;background:#e0e0e0"></div><div class="a" style="left:1283px;top:584px;width:1px;height:123px;background:#e0e0e0"></div><div class="a" style="left:25px;top:618px;width:1px;height:89px;background:#d8d8d8"></div><div class="t b" style="left:32px;top:594.4px;font-size:17.2px;color:#1a1a1a;">Node</div><div class="t b" style="left:122px;top:594.4px;font-size:17.2px;color:#1a1a1a;">Interface</div><div class="t b" style="left:230px;top:594.4px;font-size:17.2px;color:#1a1a1a;">IGP Metric</div><div class="t b" style="left:341.5px;top:594.4px;font-size:17.2px;color:#1a1a1a;">Remote Node</div><div class="t b" style="left:467.5px;top:594.4px;font-size:17.2px;color:#1a1a1a;">Traff Sim</div><div class="t b" style="left:557px;top:594.4px;font-size:17.2px;color:#1a1a1a;">WC Util</div><div class="t b" style="left:648px;top:594.4px;font-size:17.2px;color:#1a1a1a;">WC Failures</div><div class="t b" style="left:1290px;top:594.4px;font-size:17.2px;color:#1a1a1a;">WC Traffic</div><div class="t b" style="left:9px;top:627.2px;font-size:16.5px;color:#1a1a1a;">1</div><div class="t b" style="left:30px;top:626.8px;font-size:17px;color:#1a1a1a;">cr2.wdc</div><div class="t b" style="left:121px;top:626.8px;font-size:17px;color:#1a1a1a;">to_cr1.nyc</div><div class="t b" style="right:1158.5px;top:627.2px;font-size:16.5px;color:#1a1a1a;text-align:right;">13</div><div class="t b" style="left:340px;top:626.8px;font-size:17px;color:#1a1a1a;">cr1.nyc</div><div class="t b" style="right:943.5px;top:627.4px;font-size:16.3px;color:#1a1a1a;text-align:right;">2129.41</div><div class="t b" style="right:852px;top:627.4px;font-size:16.3px;color:#1a1a1a;text-align:right;">113.39</div><div class="t b" style="left:646px;top:626.9px;font-size:16.9px;color:#1a1a1a;">ct{cr1.kcy|to_cr1.sjc|cr1.sjc|to_cr1.kcy};ct{cr1.kcy|to_cr1.wdc|cr1.wdc|to_cr1.kcy}</div><div class="t b" style="right:42px;top:627.4px;font-size:16.3px;color:#1a1a1a;text-align:right;">2821.18</div><div class="t b" style="left:9px;top:657.2px;font-size:16.5px;color:#1a1a1a;">2</div><div class="t b" style="left:30px;top:656.8px;font-size:17px;color:#1a1a1a;">cr1.wdc</div><div class="t b" style="left:121px;top:656.8px;font-size:17px;color:#1a1a1a;">to_cr1.kcy</div><div class="t b" style="right:1158.5px;top:657.2px;font-size:16.5px;color:#1a1a1a;text-align:right;">48</div><div class="t b" style="left:340px;top:656.8px;font-size:17px;color:#1a1a1a;">cr1.kcy</div><div class="t b" style="right:943.5px;top:657.4px;font-size:16.3px;color:#1a1a1a;text-align:right;">918.35</div><div class="t b" style="right:852px;top:657.4px;font-size:16.3px;color:#1a1a1a;text-align:right;">112.48</div><div class="t b" style="left:646px;top:656.9px;font-size:16.9px;color:#1a1a1a;">ct{cr1.nyc|to_cr2.wdc|cr2.wdc|to_cr1.nyc}</div><div class="t b" style="right:42px;top:657.4px;font-size:16.3px;color:#1a1a1a;text-align:right;">2798.54</div><div class="t b" style="left:9px;top:686.7px;font-size:16.5px;color:#1a1a1a;">3</div><div class="t b" style="left:30px;top:686.3px;font-size:17px;color:#1a1a1a;">cr1.kcy</div><div class="t b" style="left:121px;top:686.3px;font-size:17px;color:#1a1a1a;">to_cr1.wdc</div><div class="t b" style="right:1158.5px;top:686.7px;font-size:16.5px;color:#1a1a1a;text-align:right;">48</div><div class="t b" style="left:340px;top:686.3px;font-size:17px;color:#1a1a1a;">cr1.wdc</div><div class="t b" style="right:943.5px;top:686.9px;font-size:16.3px;color:#1a1a1a;text-align:right;">978.59</div><div class="t b" style="right:852px;top:686.9px;font-size:16.3px;color:#1a1a1a;text-align:right;">100.75</div><div class="t b" style="left:646px;top:686.4px;font-size:16.9px;color:#1a1a1a;">ct{cr1.nyc|to_cr2.wdc|cr2.wdc|to_cr1.nyc}</div><div class="t b" style="right:42px;top:686.9px;font-size:16.3px;color:#1a1a1a;text-align:right;">2506.57</div><div class="a" style="left:548.2px;top:712px;width:2.8px;height:43px;background:#000"></div><div class="a" style="left:548.2px;top:752.6px;width:910.8px;height:2.7px;background:#000"></div><div class="a" style="left:1456.2px;top:712px;width:2.8px;height:43px;background:#000"></div><div class="a" style="left:988.3px;top:754px;width:2.7px;height:27px;background:#000"></div><div class="a" style="left:391px;top:780px;width:1068px;height:170.5px;border:2.8px solid #000;background:#fff"></div><div class="a" style="left:393.8px;top:782.8px;width:1062.4px;height:44.7px;background:linear-gradient(#ffffff,#f8f8f8 40%,#f0f0f0)"></div><div class="a" style="left:394px;top:827.5px;width:1062px;height:1px;background:#dedede"></div><div class="a" style="left:394px;top:868px;width:1062px;height:40px;background:#f3f3f3"></div><div class="a" style="left:394px;top:867.5px;width:1062px;height:1px;background:#e0e0e0"></div><div class="a" style="left:394px;top:907.5px;width:1062px;height:1px;background:#e0e0e0"></div><div class="a" style="left:491px;top:783.5px;width:1.5px;height:164px;background:#e0e0e0"></div><div class="a" style="left:1322px;top:783.5px;width:1.5px;height:164px;background:#e0e0e0"></div><div class="t b" style="left:401px;top:796.7px;font-size:22.8px;color:#1a1a1a;">WC Util</div><div class="t b" style="left:500px;top:796.7px;font-size:22.8px;color:#1a1a1a;">WC Failures</div><div class="t b" style="left:1330px;top:796.7px;font-size:22.8px;color:#1a1a1a;">WC Traffic</div><div class="t b" style="right:1003px;top:839.0px;font-size:22.4px;color:#1a1a1a;text-align:right;">113.39</div><div class="t b" style="left:498px;top:839.1px;font-size:22.3px;color:#1a1a1a;">ct{cr1.kcy|to_cr1.sjc|cr1.sjc|to_cr1.kcy};ct{cr1.kcy|to_cr1.wdc|cr1.wdc|to_cr1.kcy}</div><div class="t b" style="right:40px;top:839.0px;font-size:22.4px;color:#1a1a1a;text-align:right;">2821.18</div><div class="t b" style="right:1003px;top:879.0px;font-size:22.4px;color:#1a1a1a;text-align:right;">112.48</div><div class="t b" style="left:498px;top:879.1px;font-size:22.3px;color:#1a1a1a;">ct{cr1.nyc|to_cr2.wdc|cr2.wdc|to_cr1.nyc}</div><div class="t b" style="right:40px;top:879.0px;font-size:22.4px;color:#1a1a1a;text-align:right;">2798.54</div><div class="t b" style="right:1003px;top:919.0px;font-size:22.4px;color:#1a1a1a;text-align:right;">100.75</div><div class="t b" style="left:498px;top:919.1px;font-size:22.3px;color:#1a1a1a;">ct{cr1.nyc|to_cr2.wdc|cr2.wdc|to_cr1.nyc}</div><div class="t b" style="right:40px;top:919.0px;font-size:22.4px;color:#1a1a1a;text-align:right;">2506.57</div><div class="t" style="left:1454px;top:920.5px;font-size:13.2px;transform:rotate(-90deg) scaleX(0.97);transform-origin:center;width:44px;text-align:center;color:#222">402444</div><svg class="a" style="left:0;top:0" width="300" height="60"><ellipse cx="141.5" cy="25" rx="95.8" ry="22.5" fill="none" stroke="#000" stroke-width="3"/></svg>
</body></html>
